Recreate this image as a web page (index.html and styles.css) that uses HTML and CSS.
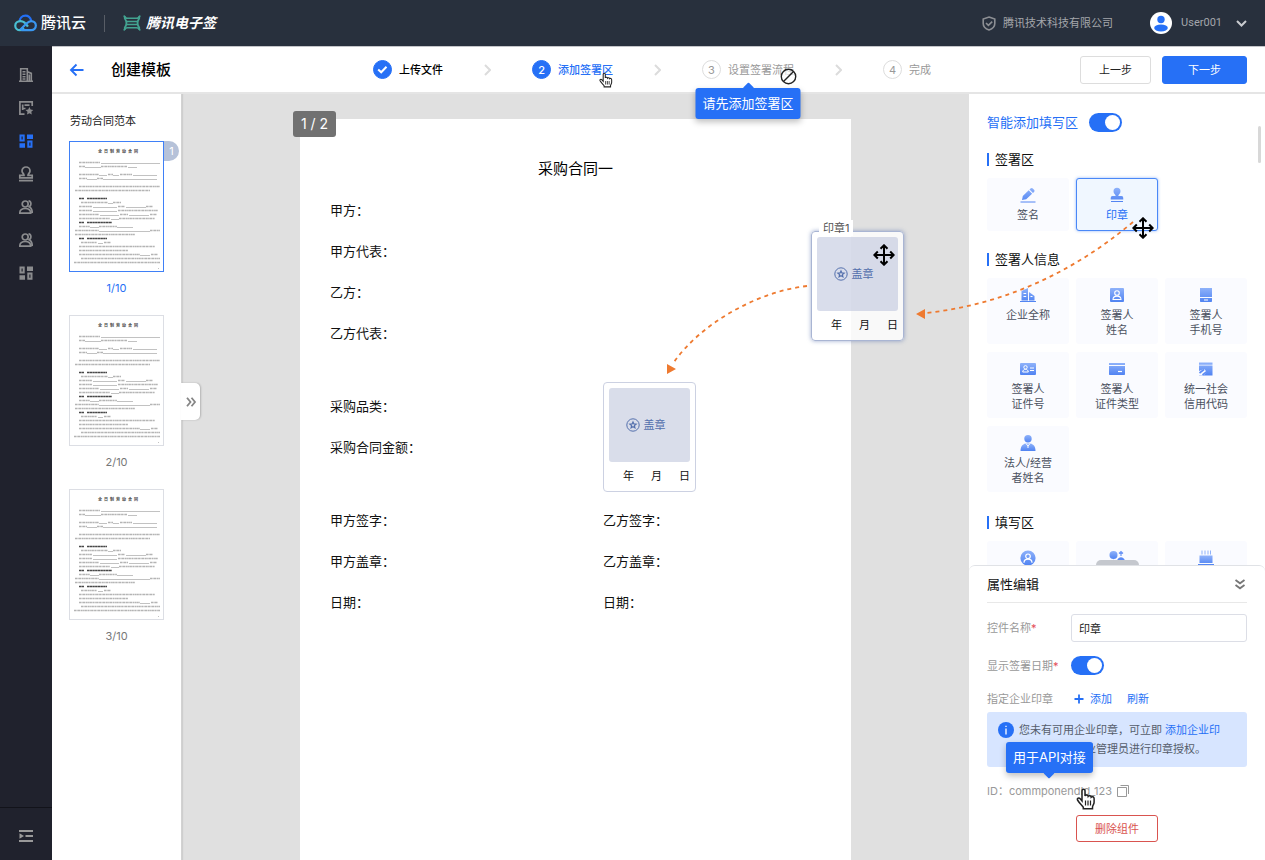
FILE: index.html
```html
<!DOCTYPE html>
<html lang="zh-CN">
<head>
<meta charset="utf-8">
<title>创建模板</title>
<link rel="stylesheet" href="styles.css">
</head>
<body>
<svg class="defs" aria-hidden="true">
  <defs>
    <linearGradient id="g" x1="0" y1="0" x2="0" y2="1"><stop offset="0" stop-color="#8fb2fa"/><stop offset="1" stop-color="#5083f2"/></linearGradient>
    <symbol id="thumb" viewBox="0 0 93 129">
      <text x="28" y="11" font-size="4" font-weight="700" fill="#444">全&#8194;日&#8194;制&#8194;劳&#8194;动&#8194;合&#8194;同</text>
      <g stroke="#b4b4b4" stroke-width="1.400" stroke-dasharray="2 .4 1 .3 2.500 .5" fill="none">
        <path d="M9 20.500h21M9 24.500h6M31 24.500h26M9 32.500h20M38 32.500h5M50 32.500h12M9 36.500h8M27 36.500h6M9 44.500h81M5 48.500h75"/>
        <path d="M11 60.500h27M43 60.500h8M9 64.500h13M48 64.500h7M76 64.500h7M9 68.500h13M48 68.500h40M9 72.500h20M50 72.500h8M80 72.500h7M9 76.500h31M49 76.500h36"/>
        <path d="M9 84.500h11M29 84.500h18M5 88.500h24M80 88.500h10M5 92.500h60M11 100.500h16M34 100.500h7M9 104.500h76M9 108.500h49M9 112.500h61M81 112.500h7M11 116.500h79M4 120.500h86"/>
      </g>
      <path d="M9 56.500h5M17 56.500h20M9 80.500h5M17 80.500h25M9 96.500h5M17 96.500h20" stroke="#484848" stroke-width="1.600" stroke-dasharray="2.400 .3"/>
      <path d="M31 21.500h59M15 25.500h16M58 25.500h9M29 33.500h8M43 33.500h6M63 33.500h24M17 37.500h10M33 37.500h54M38 61.500h5M23 65.500h24M56 65.500h20M23 69.500h24M30 73.500h19M59 73.500h20M41 77.500h8M20 85.500h9M47 85.500h16M29 89.500h51M28 101.500h5M70 113.500h10M88 126.500h1" stroke="#999" stroke-width=".6"/>
    </symbol>
    <symbol id="chev" viewBox="0 0 7 12"><path d="M1 1l5 5-5 5" fill="none" stroke="#dcdcdc" stroke-width="2"/></symbol>
    <symbol id="people" viewBox="0 0 14 14"><g fill="none" stroke="currentColor" stroke-width="1.700"><circle cx="6.200" cy="4" r="3"/><path d="M.8 13.100c0-3 2-4.600 5.400-4.600s5.400 1.600 5.400 4.600zM9.500.9c3 .4 3.200 4.600.6 5.900 2 .9 3.100 3.200 3.200 6.300"/></g></symbol>
    <symbol id="grid" viewBox="0 0 14 14"><g fill="none" stroke="currentColor" stroke-width="2"><path d="M1.500 1.500h3.200v5H1.500zM9.300 7.500h3.200v5.200H9.300z"/></g><path d="M8 .5h6V5H8zM.5 9.300H6v4.400H.5z" fill="currentColor"/></symbol>
    <symbol id="move" viewBox="0 0 22 22"><path d="M11 2v18M2 11h18M7.500 4.800L11 1.300l3.500 3.500M7.500 17.200l3.500 3.500 3.500-3.500M4.800 7.500L1.300 11l3.500 3.500M17.200 7.500l3.500 3.500-3.500 3.500" fill="none" stroke="#000" stroke-width="2"/></symbol>
    <symbol id="hand" viewBox="0 0 20 22"><path d="M6 13V2.800C6 .8 9 .8 9 2.800V8c.3-1.300 3-1.200 3.200.3.700-1 2.900-.8 3 .8.900-.9 2.900-.4 2.900 1.400v3.800c0 2.200-1.600 3-1.600 5v1.500H7.300v-1.500C6 17.500 3 14.500 1.500 12c-.8-1.700 1.400-2.700 2.700-1.200z" fill="#fff" stroke="#222" stroke-width="1.500"/><path d="M9.500 12.500v5M12 12.500v5M14.500 12.500v5" stroke="#222" stroke-width="1.200"/></symbol>
    <symbol id="star" viewBox="0 0 14 14"><g fill="none" stroke="#5470ad"><circle cx="7" cy="7" r="6.200"/><path d="M7 3.900l.9 2 2.200.2-1.700 1.500.5 2.200L7 8.700 5.100 9.800l.5-2.200-1.700-1.500 2.200-.2z" stroke-width="1.200"/></g></symbol>
  </defs>
</svg>

<div class="app">
  <header class="header">
    <a class="brand" href="#">
      <svg class="cloud" viewBox="0 0 24 18" fill="none" stroke-width="2.300"><path d="M18 6.500C17 3.300 14.800 1.300 12 1.300c-3.500 0-6 2.700-6 6" stroke="#2370f5"/><path d="M14.500 12.800C12.300 9 10 7 6.800 7 3.700 7 1.300 9 1.300 11.800s2.200 4.700 5 4.700c1.700 0 2.800-.6 4.200-2" stroke="#49bfd2"/><path d="M7.500 16.500h10.300c2.900 0 5-2 5-4.800S20.600 7 17.900 7c-1.800 0-3 .8-4.600 2.300L6.500 16" stroke="#3a98f2"/></svg>
      <span class="brand-name">腾讯云</span>
    </a>
    <span class="divider"></span>
    <a class="brand" href="#">
      <svg class="sign-logo" viewBox="0 0 18 16" fill="none" stroke="#43a391" stroke-width="1.600"><path d="M1 .5C1.500 2.500 2.500 3.300 4.500 3.300h9c2 0 3-.8 3.500-2.800M3.500 6.500h11M3.500 9.500h11M1 15.500c.5-2 1.500-2.800 3.500-2.800h9c2 0 3 .8 3.500 2.800"/><path d="M1.800 1v2.500c2.200 3 2.200 6 0 9V15M16.200 1v2.500c-2.200 3-2.200 6 0 9V15" stroke-width="1.800"/></svg>
      <strong class="product">腾讯电子签</strong>
    </a>
    <div class="account">
      <svg class="shield" viewBox="0 0 14 15" fill="none" stroke="#8d8f94" stroke-width="1.600"><path d="M7 1l5.800 2v4.500c0 3-2.300 5.300-5.800 6.500-3.500-1.200-5.800-3.500-5.800-6.500V3z"/><path d="M4 7l2.400 2.400L10.200 5.600"/></svg>
      <span class="company">腾讯技术科技有限公司</span>
      <svg class="avatar" viewBox="0 0 22 22"><circle cx="11" cy="11" r="11" fill="#fff"/><circle cx="11" cy="7.500" r="3.700" fill="#2670f6"/><ellipse cx="11" cy="16" rx="6.800" ry="3.400" fill="#2670f6"/></svg>
      <span class="user">User001</span>
      <svg class="caret" viewBox="0 0 11 7"><path d="M1 1l4.500 4.500L10 1" fill="none" stroke="#c9cbcf" stroke-width="2"/></svg>
    </div>
  </header>

  <div class="body">
    <nav class="rail">
      <a href="#" aria-label="企业"><svg viewBox="0 0 14 14" fill="none" stroke="currentColor" stroke-width="1.600"><path d="M0 13.200h14M1.700 13V.8h6.600V13M8.500 3.800l3.800 1.600V13M3.500 3.800h3M3.500 6.300h3M3.500 8.800h3M3.500 11h3M10.300 6.500V13"/></svg></a>
      <a href="#" aria-label="合同"><svg viewBox="0 0 14 14" fill="none" stroke="currentColor" stroke-width="1.700"><path d="M13.200 5V.9H.9v12.300H5.500M3.700 3.500v5.500M5.500 4.200h5M3.500 7.500h3"/><path d="M10.400 6l1.200 2.500 2.700.4-2 1.900.5 2.700-2.400-1.300-2.400 1.300.5-2.700-2-1.900 2.700-.4z" fill="currentColor" stroke="none"/></svg></a>
      <a class="on" href="#" aria-label="模板"><svg><use href="#grid"/></svg></a>
      <a href="#" aria-label="印章"><svg viewBox="0 0 14 14" fill="none" stroke="currentColor" stroke-width="1.700"><path d="M5 8.300C5 6.700 3 6 3 4a4 4 0 018 0c0 2-2 2.700-2 4.300h4.200v2.500H.8V8.300zM0 13.600h14"/></svg></a>
      <a href="#" aria-label="员工"><svg><use href="#people"/></svg></a>
      <a href="#" aria-label="角色"><svg><use href="#people"/></svg></a>
      <a href="#" aria-label="应用"><svg><use href="#grid"/></svg></a>
      <button class="fold" aria-label="展开菜单"><svg viewBox="0 0 14 14" fill="none" stroke="currentColor" stroke-width="1.800"><path d="M0 2h14M6.500 7H14M0 12h14"/><path d="M.5 4.300L5 7 .5 9.700z" fill="currentColor" stroke="none"/></svg></button>
    </nav>

    <main class="main">
      <div class="topbar">
        <a class="back" href="#" aria-label="返回"><svg viewBox="0 0 14 12" fill="none" stroke="#2670f6" stroke-width="1.900"><path d="M13.500 6H1.500M6.500 0.500L1 6l5.500 5.500"/></svg></a>
        <h1>创建模板</h1>
        <ol class="steps">
          <li class="step done"><span class="dot"><svg viewBox="0 0 11 9"><path d="M1.200 4.500l3 2.800 5.300-5.600" fill="none" stroke="#fff" stroke-width="2"/></svg></span>上传文件</li>
          <li class="sep"><svg><use href="#chev"/></svg></li>
          <li class="step active"><span class="dot">2</span>添加签署区<svg class="hand-sm"><use href="#hand"/></svg></li>
          <li class="sep"><svg><use href="#chev"/></svg></li>
          <li class="step"><span class="dot">3</span>设置签署流程
            <svg class="forbid" viewBox="0 0 16 16"><circle cx="8" cy="8" r="6.800" fill="#fff" fill-opacity=".6" stroke="#222" stroke-width="1.300"/><path d="M3.500 12.500l9-9" stroke="#222" stroke-width="1.300"/></svg>
            <span class="tip tip-up" role="tooltip">请先添加签署区</span></li>
          <li class="sep"><svg><use href="#chev"/></svg></li>
          <li class="step"><span class="dot">4</span>完成</li>
        </ol>
        <div class="actions">
          <button class="btn prev">上一步</button>
          <button class="btn next">下一步</button>
        </div>
      </div>

      <div class="work">
        <aside class="thumbs">
          <h2>劳动合同范本</h2>
          <figure class="page-thumb on"><svg viewBox="0 0 93 129"><use href="#thumb"/></svg><span class="count">1</span><figcaption>1/10</figcaption></figure>
          <figure class="page-thumb"><svg viewBox="0 0 93 129"><use href="#thumb"/></svg><figcaption>2/10</figcaption></figure>
          <figure class="page-thumb"><svg viewBox="0 0 93 129"><use href="#thumb"/></svg><figcaption>3/10</figcaption></figure>
          <button class="expand" aria-label="展开"><svg viewBox="0 0 10 10" fill="none" stroke="#858585" stroke-width="1.800"><path d="M1 .7L4.500 5 1 9.300M5.500.7L9 5 5.500 9.300"/></svg></button>
        </aside>

        <section class="canvas">
          <article class="sheet">
            <span class="pager">1 / 2</span>
            <h2>采购合同一</h2>
            <div class="group"><p>甲方：</p><p>甲方代表：</p><p>乙方：</p><p>乙方代表：</p></div>
            <div class="group"><p>采购品类：</p><p>采购合同金额：</p></div>
            <div class="group signs"><p>甲方签字：</p><p>乙方签字：</p><p>甲方盖章：</p><p>乙方盖章：</p><p>日期：</p><p>日期：</p></div>

            <div class="stamp placed">
              <div class="seal"><svg><use href="#star"/></svg>盖章</div>
              <div class="date"><span>年</span><span>月</span><span>日</span></div>
            </div>
            <div class="stamp dragging">
              <span class="stamp-name">印章1</span>
              <div class="seal"><svg><use href="#star"/></svg>盖章</div>
              <div class="date"><span>年</span><span>月</span><span>日</span></div>
              <svg class="move-cursor"><use href="#move"/></svg>
            </div>
            <svg class="arrows" viewBox="0 0 900 400">
              <path d="M833 103C770 156 700 186 626 194M507 167C455 173 400 206 374 243" fill="none" stroke="#ee7a30" stroke-width="1.800" stroke-dasharray="4 4"/>
              <path d="M616 195l9-5v10zM367 245v10l9-5z" fill="#ee7a30"/>
            </svg>
          </article>
        </section>

        <aside class="panel">
          <div class="widgets">
            <label class="smart">智能添加填写区<input class="switch" type="checkbox" checked></label>
            <h3>签署区</h3>
            <div class="tiles">
              <button class="tile"><svg viewBox="0 0 16 16" fill="url(#g)"><path d="M2 13l.8-4 5.900-5.700 3.400 3.400L6.200 12.300zM9.500 2.500l1-1c.7-.7 1.600-.7 2.300 0l1.200 1.200c.7.700.7 1.500 0 2.200l-1 1zM.5 14.500h15v1H.5z"/></svg>签名</button>
              <button class="tile picked"><svg viewBox="0 0 16 16" fill="url(#g)"><path d="M6.700 9c0-1.500-2.200-2.200-2.200-4.800a3.500 3.500 0 017 0C11.500 6.800 9.300 7.500 9.300 9h3.200c1.600 0 1.800 1 1.800 3.500H1.700C1.700 10 2 9 3.500 9zM2 14h12v1H2z"/></svg>印章<svg class="move-tile"><use href="#move"/></svg></button>
            </div>
            <h3>签署人信息</h3>
            <div class="tiles people-tiles">
              <button class="tile"><svg viewBox="0 0 16 16" fill="url(#g)"><path d="M1.500 13.500V4L8 1v12.500zM9 13.500V5l5.500 4v4.500zM0 14h16v1H0z"/><path d="M3.500 6.500h2.700M3.500 9.500h2.700M10.500 9.500h2" stroke="#fff"/></svg>企业全称</button>
              <button class="tile"><svg viewBox="0 0 16 16"><rect x="1" y="1" width="14" height="14" rx="1" fill="url(#g)"/><g fill="none" stroke="#fff" stroke-width="1.100"><circle cx="8" cy="6" r="2.300"/><path d="M4 12.500c0-4.500 8-4.500 8 0z"/></g></svg>签署人<br>姓名</button>
              <button class="tile"><svg viewBox="0 0 16 16"><path d="M2 1h12v9H2zM2 11h12v3c0 .6-.4 1-1 1H3c-.6 0-1-.4-1-1z" fill="url(#g)"/><path d="M6 13h4" stroke="#fff"/></svg>签署人<br>手机号</button>
              <button class="tile"><svg viewBox="0 0 16 16"><rect y="2" width="16" height="12" rx="1" fill="url(#g)"/><g fill="none" stroke="#fff"><circle cx="5.500" cy="6.300" r="1.700"/><path d="M2.700 11c0-3.500 5.600-3.500 5.600 0zM10 7h4M10 9.500h4"/></g></svg>签署人<br>证件号</button>
              <button class="tile"><svg viewBox="0 0 16 16"><path d="M0 2h16v2H0zM0 5h16v8c0 .6-.4 1-1 1H1c-.6 0-1-.4-1-1z" fill="url(#g)"/><path d="M9 10.500h4" stroke="#fff" stroke-width="1.200"/></svg>签署人<br>证件类型</button>
              <button class="tile"><svg viewBox="0 0 16 16"><path d="M1 1.500h13.500v2.300H1zM1 4.500h13.500V14.500H1z" fill="url(#g)"/><path d="M0 7.500h1L3.500 9 1 11.500V15h4.500l3.500-3.500" fill="none"/><path d="M1 10v4.500h4.500L9 11 6 8z" fill="#fafbff"/><path d="M1.500 12L6 8.500M4.500 14L9 10.500" stroke="#5f8df4" stroke-width="1.700"/></svg>统一社会<br>信用代码</button>
              <button class="tile"><svg viewBox="0 0 16 16" fill="url(#g)"><circle cx="8" cy="3.800" r="3.700"/><path d="M.5 16c0-4.500 2-6.700 5-7.500h5c3 .8 5 3 5 7.500z"/><path d="M6 8.500l2 2.500 2-2.500M8 11v2" fill="none" stroke="#fff"/></svg>法人/经营<br>者姓名</button>
            </div>
            <h3>填写区</h3>
            <div class="tiles">
              <button class="tile" aria-label="姓名"><svg viewBox="0 0 16 16"><circle cx="8" cy="8" r="7.600" fill="url(#g)"/><g fill="none" stroke="#fff" stroke-width="1.200"><circle cx="8" cy="6.300" r="2.300"/><path d="M4 12.700c0-4.800 8-4.800 8 0"/></g></svg></button>
              <button class="tile" aria-label="性别"><svg viewBox="0 0 16 16"><circle cx="4.500" cy="5" r="4" fill="url(#g)"/><path d="M8 11c1-5 7-5 8 0zM2 12c1-3 4-3 5 0z" fill="#5b8af4"/><path d="M12 6V1.500M10 3.500l2-2 2 2" fill="none" stroke="#6d97f6" stroke-width="1.200"/></svg></button>
              <button class="tile" aria-label="生日"><svg viewBox="0 0 16 16"><path d="M1.500 5.500h13V13h-13zM0 14h16v1H0z" fill="url(#g)"/><path d="M4 .5v4M7 .5v4M10 .5v4M12.500 .5v4" stroke="#8fb2fa"/></svg></button>
            </div>
            <span class="scroll"></span>
          </div>

          <form class="props">
            <span class="grip"></span>
            <div class="props-head"><h2>属性编辑</h2><button type="button" class="collapse" aria-label="收起"><svg viewBox="0 0 10 11" fill="none" stroke="#777" stroke-width="1.800"><path d="M.5 1L5 4.300 9.500 1M.5 6L5 9.300 9.500 6"/></svg></button></div>
            <div class="field name-row"><label for="name">控件名称<i>*</i></label><input id="name" class="text" type="text" value="印章"></div>
            <div class="field date-row"><label for="showdate">显示签署日期<i>*</i></label><input id="showdate" class="switch" type="checkbox" checked></div>
            <div class="field seal-row"><span class="label">指定企业印章</span><a class="add" href="#"><svg viewBox="0 0 10 10"><path d="M5 .500v9M.500 5h9" stroke="#2670f6" stroke-width="1.800"/></svg>添加</a><a href="#">刷新</a></div>
            <div class="notice">
              <svg class="info" viewBox="0 0 16 16"><circle cx="8" cy="8" r="8" fill="#2670f6"/><path d="M8 3.700v1.400M8 6.500v6" stroke="#fff" stroke-width="1.300"/></svg>
              <p>您未有可用企业印章，可立即 <a href="#">添加企业印章</a>，或联系企业管理员进行印章授权。</p>
            </div>
            <div class="id-row">ID：commponendId_123<svg class="copy" viewBox="0 0 12 12" fill="none" stroke="#999"><path d="M.5 2.500h9v9h-9zM3.500.500h8v8.500"/></svg>
              <span class="tip tip-down" role="tooltip">用于API对接</span>
              <svg class="hand-lg"><use href="#hand"/></svg>
            </div>
            <button type="button" class="delete">删除组件</button>
          </form>
        </aside>
      </div>
    </main>
  </div>
</div>
</body>
</html>
```
FILE: styles.css
```css
* { box-sizing: border-box; margin: 0; padding: 0; }
body { font: 11px/16px Inter, "Noto Sans CJK SC", sans-serif; color: #222; }
svg { display: block; flex: none; overflow: visible; }
button, input { font: inherit; color: inherit; border: 0; background: none; }
a { color: #2670f6; text-decoration: none; }
ol { list-style: none; }
i { font-style: normal; }
.defs { position: absolute; width: 0; height: 0; }

.app { height: 100vh; display: flex; flex-direction: column; overflow: hidden; }

.header { flex: none; height: 46px; padding: 0 18px 0 14px; display: flex; align-items: center; background: #28303d; color: #a4a6ab; }
.brand { display: flex; align-items: center; color: #fff; }
.cloud { width: 23px; height: 18px; margin-right: 4px; }
.brand-name { font-size: 15px; font-weight: 500; }
.divider { width: 1px; height: 17px; margin: 0 18px; background: #585d66; }
.sign-logo { width: 18px; height: 16px; margin-right: 5px; }
.product { font-size: 14px; font-style: italic; font-weight: 700; }
.account { margin-left: auto; display: flex; align-items: center; }
.shield { width: 14px; height: 15px; margin-right: 7px; }
.avatar { width: 22px; height: 22px; margin: 0 9px 0 37px; }
.user { font-family: Roboto, sans-serif; }
.caret { width: 11px; height: 7px; margin-left: 14px; }

.body { flex: 1; min-height: 0; display: flex; }
.rail { flex: none; width: 52px; padding-top: 12px; display: flex; flex-direction: column; align-items: center; background: #20222d; }
.rail a { height: 33px; display: flex; align-items: center; color: #8b8c8e; }
.rail a.on { color: #2670f6; }
.rail svg { width: 14px; height: 14px; }
.rail .fold { width: 100%; height: 53px; margin-top: auto; padding-top: 3px; display: flex; align-items: center; justify-content: center; border-top: 1px solid #12131a; color: #999; }

.main { flex: 1; min-width: 0; display: flex; flex-direction: column; }
.topbar { flex: none; position: relative; z-index: 3; height: 48px; padding: 0 18px; display: flex; align-items: center; border-top: 1px solid #c4c5c9; border-bottom: 2px solid #e5e5e5; background: #fff; }
.back svg { width: 14px; height: 12px; }
.topbar h1 { margin-left: 27px; font-size: 15px; line-height: 20px; font-weight: 500; color: #000; }
.steps { margin-left: 202px; display: flex; align-items: center; gap: 41px; }
.step { position: relative; display: flex; align-items: center; gap: 7px; white-space: nowrap; color: #999; }
.dot { width: 19px; height: 19px; display: flex; align-items: center; justify-content: center; border: 1px solid #ddd; border-radius: 50%; }
.dot svg { width: 11px; height: 9px; }
.sep svg { width: 7px; height: 12px; }
.done { font-weight: 500; color: #000; }
.active { font-weight: 500; color: #2670f6; }
.done .dot, .active .dot { border-color: #2670f6; background: #2670f6; color: #fff; }
.hand-sm { position: absolute; right: 0; top: 12px; width: 14px; height: 16px; }
.forbid { position: absolute; right: -3px; top: 8px; width: 17px; height: 17px; }

.tip { position: absolute; z-index: 4; height: 31px; padding: 0 7px; border-radius: 3px; background: #2670f6; box-shadow: 0 3px 6px rgba(0, 0, 0, .25); font-size: 13px; line-height: 31px; font-weight: 400; color: #fff; white-space: nowrap; }
.tip::after { content: ""; position: absolute; left: 50%; width: 8px; height: 8px; margin-left: -4px; border-radius: 1px; background: #2670f6; transform: rotate(45deg); }
.tip-up { left: 50%; top: 28px; transform: translateX(-50%); }
.tip-up::after { top: -4px; }
.tip-down { left: 19px; bottom: 26px; }
.tip-down::after { bottom: -4px; }

.actions { margin-left: auto; display: flex; gap: 11px; }
.btn { height: 28px; border-radius: 3px; border: 1px solid #ddd; background: #fff; color: #222; }
.prev { width: 71px; }
.next { width: 85px; border-color: #2670f6; background: #2670f6; color: #fff; }

.work { flex: 1; min-height: 0; display: flex; }
.thumbs { position: relative; z-index: 2; flex: none; width: 130px; padding: 19px 17px 0; background: #fff; border-right: 1px solid #d2d2d2; box-shadow: 1px 0 1px rgba(0, 0, 0, .08); }
.thumbs h2 { margin: 0 0 12px 1px; font-size: 11px; line-height: 16px; font-weight: 400; color: #222; white-space: nowrap; }
.page-thumb { position: relative; margin-bottom: 12px; }
.page-thumb > svg { width: 95px; height: 131px; border: 1px solid #dcdee4; }
.page-thumb.on > svg { border-color: #3f80f7; }
.page-thumb figcaption { line-height: 32px; margin-bottom: -1px; text-align: center; color: #777; }
.page-thumb.on figcaption { color: #2670f6; }
.count { position: absolute; left: 95px; top: 0; width: 15px; height: 20px; border-radius: 0 10px 10px 0; background: #b6c2d9; line-height: 20px; text-align: center; color: #fff; }
.expand { position: absolute; left: 129px; top: 289px; width: 19px; height: 37px; display: flex; align-items: center; justify-content: center; border-radius: 0 5px 5px 0; background: #fff; box-shadow: 1px 0 2px rgba(0, 0, 0, .2); }
.expand svg { width: 10px; height: 10px; }

.canvas { position: relative; z-index: 1; flex: 1; min-width: 0; padding: 25px 118px 0; display: flex; background: #e0e0e0; }
.sheet { position: relative; flex: 1; padding: 29px 0 0 30px; background: #fff; }
.pager { position: absolute; left: -7px; top: -8px; width: 43px; height: 26px; border-radius: 3px; background: #717171; font-size: 14px; line-height: 26px; text-align: center; color: #fff; }
.sheet h2 { margin-left: -30px; font-size: 15px; line-height: 42px; font-weight: 400; text-align: center; color: #000; }
.group { margin-bottom: 32px; font-size: 13px; line-height: 41px; color: #111; }
.signs { display: grid; grid-template-columns: 11fr 10fr; }

.stamp { position: absolute; width: 93px; height: 110px; padding: 5px; border: 1px solid #ccd1e2; border-radius: 4px; background: #fff; }
.placed { left: 303px; top: 263px; }
.dragging { left: 511px; top: 112px; border-color: #a9b5d3; background: rgba(255, 255, 255, .8); box-shadow: 0 0 4px rgba(90, 115, 175, .6); }
.seal { height: 74px; display: flex; align-items: center; justify-content: center; gap: 4px; padding-right: 8px; border-radius: 3px; background: #d9ddea; color: #5470ad; }
.dragging .seal { background: rgba(180, 188, 215, .5); }
.seal svg { width: 14px; height: 14px; }
.date { display: flex; justify-content: flex-end; gap: 17px; line-height: 29px; color: #111; }
.stamp-name { position: absolute; left: 7px; top: -12px; height: 16px; padding: 0 4px; background: #fff; color: #555; }
.move-cursor { position: absolute; right: 8px; top: 12px; width: 22px; height: 22px; }
.arrows { position: absolute; left: 0; top: 0; width: 900px; height: 400px; pointer-events: none; }

.panel { flex: none; width: 296px; display: flex; flex-direction: column; background: #fff; }
.widgets { position: relative; flex: 1; min-height: 0; padding: 19px 18px 0; overflow: hidden; }
.smart { display: flex; align-items: center; gap: 11px; margin-bottom: 17px; font-size: 13px; line-height: 19px; color: #2670f6; }
.switch { appearance: none; width: 33px; height: 19px; padding: 2px; border-radius: 10px; background: #2670f6; }
.switch::before { content: ""; display: block; width: 15px; height: 15px; margin-left: auto; border-radius: 50%; background: #fff; }
.widgets h3 { display: flex; align-items: center; gap: 6px; margin-bottom: 9px; font-size: 13px; line-height: 20px; font-weight: 400; color: #111; }
.widgets h3::before { content: ""; width: 2px; height: 13px; background: #2670f6; }
.tiles { display: grid; grid-template-columns: repeat(3, 1fr); gap: 8px 7px; margin-bottom: 18px; }
.people-tiles { margin-bottom: 20px; }
.tile { position: relative; display: flex; flex-direction: column; align-items: center; min-height: 53px; padding: 9px 0 6px; border-radius: 3px; background: #fafbff; line-height: 15px; color: #4a5160; }
.tile > svg { width: 16px; height: 16px; margin-bottom: 5px; }
.tile.picked { padding-top: 8px; border: 1px solid #4a88f7; background: #f0f7ff; box-shadow: 0 0 3px rgba(38, 112, 246, .5); color: #2670f6; }
.tile .move-tile { position: absolute; right: 3px; bottom: -9px; width: 22px; height: 22px; margin: 0; }
.scroll { position: absolute; right: 4px; top: 32px; width: 3px; height: 37px; border-radius: 2px; background: #d8d8d8; }

.props { position: relative; flex: none; padding: 0 18px 18px; border-top: 1px solid #e0e2e6; border-radius: 6px 6px 0 0; background: #fff; }
.grip { position: absolute; left: 127px; top: -6px; width: 43px; height: 5px; border-radius: 5px 5px 0 0; background: #c5c8ce; }
.props-head { display: flex; align-items: center; justify-content: space-between; height: 37px; border-bottom: 1px solid #e8e8e8; }
.props-head h2 { font-size: 13px; font-weight: 400; color: #111; }
.collapse { padding: 0 2px; }
.collapse svg { width: 10px; height: 11px; }
.field { display: flex; align-items: center; }
.field label, .label { flex: none; width: 84px; color: #999; }
.field i { color: #e34d59; }
.name-row { margin-top: 11px; }
.text { flex: 1; min-width: 0; height: 28px; padding: 0 7px; border: 1px solid #dcdee6; border-radius: 3px; background: #fff; color: #222; }
.date-row { margin-top: 14px; }
.seal-row { margin-top: 16px; }
.seal-row a + a { margin-left: 15px; }
.add { display: flex; align-items: center; gap: 6px; padding-left: 3px; }
.add svg { width: 10px; height: 10px; }
.notice { display: flex; gap: 5px; margin-top: 5px; padding: 9px 16px 8px 11px; border-radius: 3px; background: #d7e5ff; line-height: 19px; color: #555d6b; }
.info { width: 16px; height: 16px; margin-top: 1px; }
.id-row { position: relative; display: flex; align-items: center; gap: 5px; margin-top: 16px; color: #999; }
.copy { width: 12px; height: 12px; }
.hand-lg { position: absolute; left: 89px; top: 5px; width: 20px; height: 22px; }
.delete { display: block; width: 82px; height: 27px; margin: 16px auto 0; border: 1px solid #d9544f; border-radius: 3px; color: #d9544f; }
```
